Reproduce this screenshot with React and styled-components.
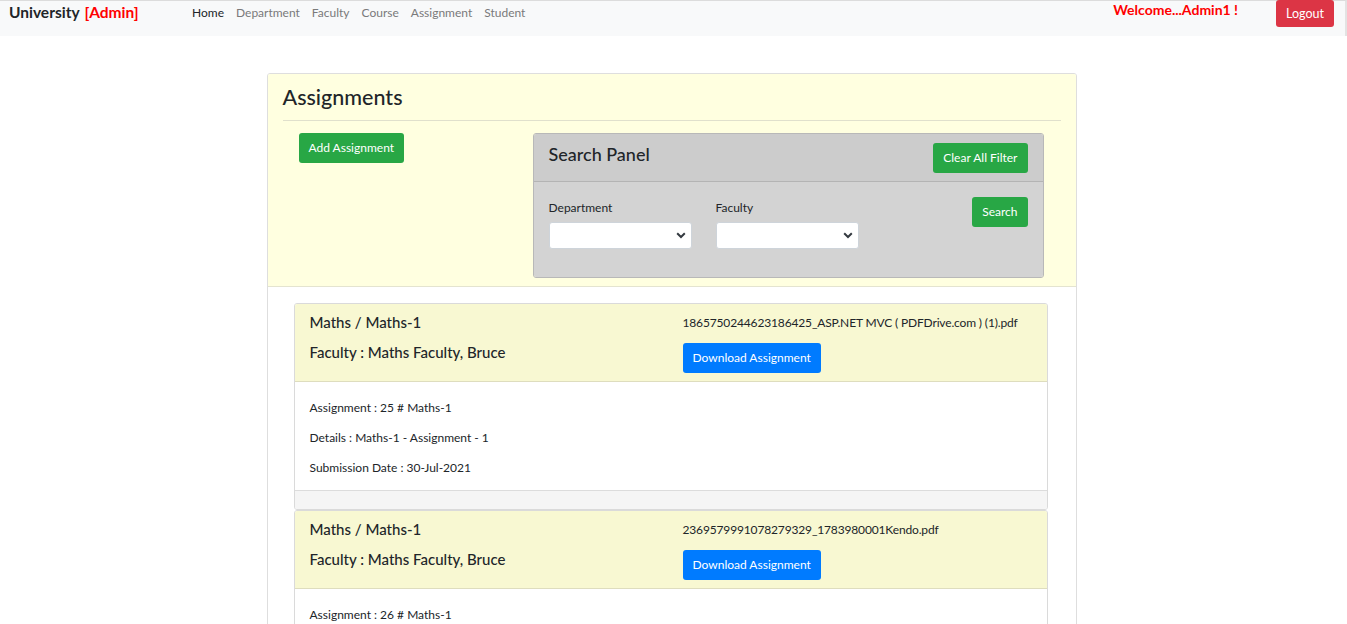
import React from 'react'
import styled, { createGlobalStyle } from 'styled-components'

const GlobalStyle = createGlobalStyle`
  body {
    margin: 0;
    font-family: Lato, "Open Sans", sans-serif;
    font-size: 12px;
    line-height: 1.5;
    color: #212529;
    background: #fff;
  }
  * { box-sizing: border-box; }
`

const Navbar = styled.nav`
  display: flex;
  align-items: flex-start;
  height: 36px;
  padding: 0 11px 0 9px;
  background: #f8f9fa;
  border-top: 1px solid #dcdcdc;
  border-right: 2px solid #e3e3e3;
`

const Brand = styled.div`
  font-size: 15.5px;
  font-weight: 700;
  line-height: 20px;
  padding-top: 1px;
  width: 183px;
  color: #212529;
  span { color: #ff0000; margin-left: 5px; }
`

const NavLinks = styled.div`
  display: flex;
  gap: 12px;
  padding-top: 3px;
`

const NavLink = styled.a`
  font-size: 12px;
  line-height: 18px;
  color: ${p => (p.$active ? '#212529' : '#7a7a7a')};
  text-decoration: none;
`

const Welcome = styled.div`
  margin-left: auto;
  margin-right: 38px;
  color: #ff0000;
  font-weight: 700;
  font-size: 14px;
  line-height: 18px;
`

const Button = styled.button`
  font-family: inherit;
  font-size: 12px;
  line-height: 18px;
  padding: 5px 9px;
  border: 1px solid transparent;
  border-radius: 3px;
  color: #fff;
  background: ${p => p.$bg};
  cursor: pointer;
`

const LogoutButton = styled(Button)`
  height: 27px;
  margin-top: -1px;
  padding: 3px 9px;
  font-size: 12.5px;
`

const Page = styled.main`
  padding: 37px 4px 0 0;
`

const OuterCard = styled.section`
  width: 810px;
  margin: 0 auto;
  border: 1px solid #dedede;
  border-radius: 3px;
  overflow: hidden;
`

const TopSection = styled.div`
  background: #ffffe0;
  padding: 10px 15px 8px;
  border-bottom: 1px solid #e4e4d0;
`

const PageTitle = styled.h3`
  margin: 0;
  font-size: 21.5px;
  font-weight: 500;
  line-height: 26px;
`

const Rule = styled.hr`
  margin: 10px 0 12px;
  border: 0;
  border-top: 1px solid #e0e0cc;
`

const TopRow = styled.div`
  display: flex;
  align-items: flex-start;
  padding-left: 16px;
`

const AddCol = styled.div`
  width: 234px;
`

const SearchPanel = styled.div`
  width: 511px;
  border: 1px solid #b8b8b8;
  border-radius: 3px;
  overflow: hidden;
`

const SearchHeader = styled.div`
  display: flex;
  justify-content: space-between;
  align-items: flex-start;
  height: 48px;
  padding: 9px 15px 0;
  background: #cccccc;
  border-bottom: 1px solid #b4b4b4;
`

const SearchTitle = styled.h4`
  margin: 0;
  font-size: 18px;
  font-weight: 500;
  line-height: 22px;
`

const SearchBody = styled.div`
  display: flex;
  align-items: flex-start;
  padding: 17px 15px 28px;
  background: #d3d3d3;
`

const Field = styled.div`
  width: 143px;
  margin-right: 24px;
`

const FieldLabel = styled.label`
  display: block;
  font-size: 12px;
  line-height: 18px;
  margin-bottom: 5px;
`

const SelectWrap = styled.div`
  position: relative;
  svg {
    position: absolute;
    right: 6px;
    top: 10px;
    pointer-events: none;
  }
`

const Select = styled.select`
  width: 100%;
  height: 27px;
  appearance: none;
  border: 1px solid #ced4da;
  border-radius: 3px;
  background: #fff;
  font-family: inherit;
`

const SearchCol = styled.div`
  margin-left: auto;
  margin-top: -2px;
`

const ListSection = styled.div`
  background: #fff;
  padding: 16px 28px 0 26px;
`

const ItemCard = styled.article`
  border: 1px solid #dadada;
  border-radius: 3px;
  overflow: hidden;
`

const ItemHeader = styled.div`
  display: grid;
  grid-template-columns: 373px 1fr;
  padding: 9px 15px 8px;
  background: #f8f8d2;
  border-bottom: 1px solid #deddbe;
`

const ItemTitle = styled.h5`
  margin: 0 0 ${p => p.$mb || 0}px;
  font-size: 15px;
  font-weight: 500;
  line-height: 18px;
`

const FileName = styled.div`
  font-size: 12px;
  line-height: 18px;
  letter-spacing: -0.15px;
  margin: 1px 0 11px;
`

const ItemBody = styled.div`
  padding: 17px 15px 13px;
  p {
    margin: 0 0 12px;
    font-size: 12px;
    line-height: 18px;
  }
  p:last-child { margin-bottom: 0; }
`

const ItemFooter = styled.div`
  height: 19px;
  background: #f5f5f5;
  border-top: 1px solid #dcdcdc;
`

const Chevron = () => (
  <svg width="10" height="7" viewBox="0 0 10 7">
    <path d="M1.2 1.3 L5 5 L8.8 1.3" fill="none" stroke="#343a40" strokeWidth="2" />
  </svg>
)

const assignments = [
  { id: 25, file: '1865750244623186425_ASP.NET MVC ( PDFDrive.com ) (1).pdf', detail: 'Maths-1 - Assignment - 1', date: '30-Jul-2021' },
  { id: 26, file: '2369579991078279329_1783980001Kendo.pdf', detail: 'Maths-1 - Assignment - 2', date: '30-Jul-2021' },
]

const App = () => (
  <>
    <GlobalStyle />
    <Navbar>
      <Brand>University<span>[Admin]</span></Brand>
      <NavLinks>
        <NavLink $active href="#">Home</NavLink>
        <NavLink href="#">Department</NavLink>
        <NavLink href="#">Faculty</NavLink>
        <NavLink href="#">Course</NavLink>
        <NavLink href="#">Assignment</NavLink>
        <NavLink href="#">Student</NavLink>
      </NavLinks>
      <Welcome>Welcome...Admin1 !</Welcome>
      <LogoutButton $bg="#dc3545">Logout</LogoutButton>
    </Navbar>

    <Page>
      <OuterCard>
        <TopSection>
          <PageTitle>Assignments</PageTitle>
          <Rule />
          <TopRow>
            <AddCol>
              <Button $bg="#28a745">Add Assignment</Button>
            </AddCol>
            <SearchPanel>
              <SearchHeader>
                <SearchTitle>Search Panel</SearchTitle>
                <Button $bg="#28a745">Clear All Filter</Button>
              </SearchHeader>
              <SearchBody>
                <Field>
                  <FieldLabel>Department</FieldLabel>
                  <SelectWrap>
                    <Select />
                    <Chevron />
                  </SelectWrap>
                </Field>
                <Field>
                  <FieldLabel>Faculty</FieldLabel>
                  <SelectWrap>
                    <Select />
                    <Chevron />
                  </SelectWrap>
                </Field>
                <SearchCol>
                  <Button $bg="#28a745">Search</Button>
                </SearchCol>
              </SearchBody>
            </SearchPanel>
          </TopRow>
        </TopSection>

        <ListSection>
          {assignments.map(a => (
            <ItemCard key={a.id}>
              <ItemHeader>
                <div>
                  <ItemTitle $mb={12}>Maths / Maths-1</ItemTitle>
                  <ItemTitle>Faculty : Maths Faculty, Bruce</ItemTitle>
                </div>
                <div>
                  <FileName>{a.file}</FileName>
                  <Button $bg="#007bff">Download Assignment</Button>
                </div>
              </ItemHeader>
              <ItemBody>
                <p>Assignment : {a.id} # Maths-1</p>
                <p>Details : {a.detail}</p>
                <p>Submission Date : {a.date}</p>
              </ItemBody>
              <ItemFooter />
            </ItemCard>
          ))}
        </ListSection>
      </OuterCard>
    </Page>
  </>
)

export default App
